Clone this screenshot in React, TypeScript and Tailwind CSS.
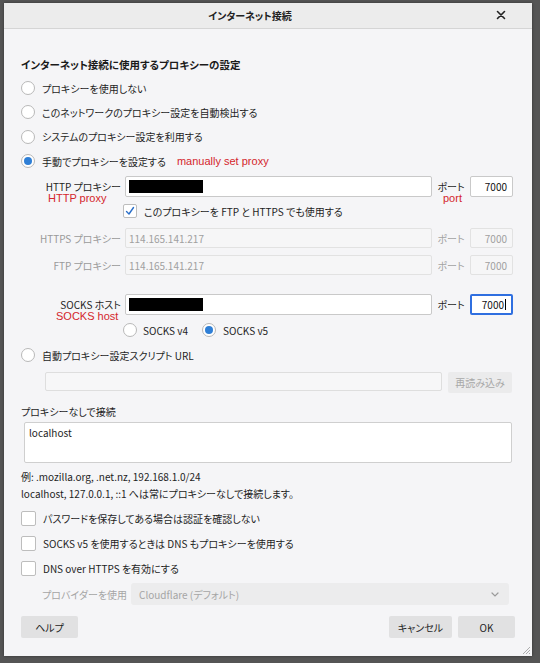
import React from "react";

const jp = "font-['Noto_Sans_CJK_JP','Noto_Sans',sans-serif] [font-feature-settings:'palt']";
const note = "font-['Liberation_Sans',Arial,sans-serif] text-[11px] leading-none text-[#d4262c]";

const Radio: React.FC<{ checked?: boolean }> = ({ checked }) => (
  <span className="flex h-[14px] w-[14px] shrink-0 items-center justify-center rounded-full border border-[#b8b8b8] bg-white">
    {checked && <span className="h-[8px] w-[8px] rounded-full bg-[#2f7fd6]" />}
  </span>
);

const Check: React.FC<{ checked?: boolean; size?: string }> = ({ checked, size = "h-[14px] w-[14px]" }) => (
  <span className={`flex ${size} shrink-0 items-center justify-center rounded-[2px] border border-[#bdbdbd] bg-white`}>
    {checked && (
      <svg width="10" height="10" viewBox="0 0 10 10" fill="none">
        <path d="M1.5 5.5 L4 8 L8.5 1.5" stroke="#2b6fc9" strokeWidth="1.4" strokeLinecap="round" strokeLinejoin="round" />
      </svg>
    )}
  </span>
);

// one "label / host / port" line of the manual proxy block
const ProxyRow: React.FC<{
  label: string;
  value?: string;
  disabled?: boolean;
  redacted?: boolean;
  focusPort?: boolean;
  h: string;
  className?: string;
  children?: React.ReactNode;
}> = ({ label, value, disabled, redacted, focusPort, h, className = "", children }) => (
  <div className={`relative flex items-center ${h} ${className}`}>
    <div className={`w-[100px] text-right leading-[11px] ${disabled ? "text-[#9a9a9a]" : "text-[#1e1e1e]"}`}>{label}</div>
    <div
      className={`ml-[4px] flex h-full w-[307px] items-center rounded-[2px] border px-[3px] ${
        disabled ? "border-[#e2e2e2] bg-[#f6f6f7] text-[#a0a0a0]" : "border-[#c9c9c9] bg-white"
      }`}
    >
      {redacted && <span className="h-[13px] w-[74px] bg-black" />}
      {value && <span>{value}</span>}
    </div>
    <div className={`w-[38px] text-center leading-[11px] ${disabled ? "text-[#a3a3a3]" : "text-[#1e1e1e]"}`}>ポート</div>
    <div
      className={`flex h-full w-[43px] items-center justify-end rounded-[2px] px-[5px] ${
        focusPort
          ? "border-2 border-[#2f6fe0] bg-white text-[#111]"
          : disabled
          ? "border border-[#e2e2e2] bg-[#f6f6f7] text-[#a0a0a0]"
          : "border border-[#c9c9c9] bg-white text-[#111]"
      }`}
    >
      7000{focusPort && <span className="ml-[1px] h-[11px] w-px bg-black" />}
    </div>
    {children}
  </div>
);

const App: React.FC = () => {
  return (
    <div className={`h-[663px] w-[540px] overflow-hidden bg-[#555555] pl-[4px] pt-[3px] ${jp} text-[10px] text-[#1e1e1e]`}>
      <div className="flex h-[653px] w-[528px] flex-col bg-[#f5f5f7] shadow-[0_0_3px_rgba(0,0,0,0.4)]">
        {/* Title bar */}
        <div className="relative flex h-[26px] shrink-0 items-center justify-center border-b border-[#d5d5d5] bg-[#ececec] pr-[36px]">
          <span className="text-[10px] font-semibold text-[#222]">インターネット接続</span>
          <span className="absolute right-[26px] top-[7px]">
            <svg width="10" height="10" viewBox="0 0 10 10">
              <path d="M1.5 1.5 L8.5 8.5 M8.5 1.5 L1.5 8.5" stroke="#222" strokeWidth="1.6" strokeLinecap="round" />
            </svg>
          </span>
        </div>

        <div className="flex flex-col pl-[17px]">
          <div className="mt-[28px] h-[16px] text-[10.5px] font-bold leading-[16px] text-[#1a1a1a]">
            インターネット接続に使用するプロキシーの設定
          </div>

          <div className="mt-[3px] flex h-[24px] items-center gap-[7px]">
            <Radio />
            <span>プロキシーを使用しない</span>
          </div>
          <div className="flex h-[24px] items-center gap-[7px]">
            <Radio />
            <span>このネットワークのプロキシー設定を自動検出する</span>
          </div>
          <div className="flex h-[25px] items-center gap-[7px]">
            <Radio />
            <span>システムのプロキシー設定を利用する</span>
          </div>
          <div className="flex h-[24px] items-center gap-[7px]">
            <Radio checked />
            <span>手動でプロキシーを設定する</span>
            <span className={`${note} ml-[4px]`}>manually set proxy</span>
          </div>

          <ProxyRow label="HTTP プロキシー" redacted h="h-[21px]" className="mt-[3px]">
            <span className={`${note} absolute left-[27px] top-[17px]`}>HTTP proxy</span>
            <span className={`${note} absolute left-[422px] top-[17px]`}>port</span>
          </ProxyRow>

          <div className="ml-[102px] mt-[7px] flex h-[14px] items-center gap-[7px]">
            <Check checked />
            <span>このプロキシーを FTP と HTTPS でも使用する</span>
          </div>

          <ProxyRow label="HTTPS プロキシー" value="114.165.141.217" disabled h="h-[20px]" className="mt-[10px]" />
          <ProxyRow label="FTP プロキシー" value="114.165.141.217" disabled h="h-[20px]" className="mt-[7px]" />

          <ProxyRow label="SOCKS ホスト" redacted focusPort h="h-[21px]" className="mt-[19px]">
            <span className={`${note} absolute left-[35px] top-[17px]`}>SOCKS host</span>
          </ProxyRow>

          <div className="ml-[102px] mt-[8px] flex h-[14px] items-center">
            <Radio />
            <span className="ml-[6px]">SOCKS v4</span>
            <span className="ml-[14px]">
              <Radio checked />
            </span>
            <span className="ml-[7px]">SOCKS v5</span>
          </div>

          <div className="mt-[11px] flex h-[14px] items-center gap-[7px]">
            <Radio />
            <span>自動プロキシー設定スクリプト URL</span>
          </div>

          <div className="mt-[10px] flex h-[20px] items-start">
            <div className="ml-[24px] h-[19px] w-[397px] rounded-[2px] border border-[#dedede] bg-[#f7f7f8]" />
            <div className="ml-[6px] flex h-[21px] w-[64px] items-center justify-center rounded-[2px] bg-[#ebebec] text-[#a8a8a8]">
              再読み込み
            </div>
          </div>

          <div className="mt-[12px] flex h-[14px] items-center">プロキシーなしで接続</div>

          <div className="ml-[3px] mt-[4px] h-[41px] w-[488px] rounded-[2px] border border-[#cfcfcf] bg-white px-[4px] pt-[3px] leading-[14px]">
            localhost
          </div>

          <div className="mt-[6px] flex h-[14px] items-center">例: .mozilla.org, .net.nz, 192.168.1.0/24</div>
          <div className="mt-[3px] flex h-[14px] items-center">localhost, 127.0.0.1, ::1 へは常にプロキシーなしで接続します。</div>

          <div className="mt-[10px] flex h-[16px] items-center gap-[7px]">
            <Check size="h-[15px] w-[15px]" />
            <span>パスワードを保存してある場合は認証を確認しない</span>
          </div>
          <div className="mt-[9px] flex h-[16px] items-center gap-[7px]">
            <Check size="h-[15px] w-[15px]" />
            <span>SOCKS v5 を使用するときは DNS もプロキシーを使用する</span>
          </div>
          <div className="mt-[9px] flex h-[16px] items-center gap-[7px]">
            <Check size="h-[15px] w-[15px]" />
            <span>DNS over HTTPS を有効にする</span>
          </div>

          <div className="mt-[7px] flex h-[22px] items-center">
            <span className="ml-[21px] w-[89px] text-[#a5a5a5]">プロバイダーを使用</span>
            <div className="flex h-full w-[378px] items-center justify-between rounded-[3px] bg-[#ececed] pl-[8px] pr-[10px] text-[#a5a5a5]">
              <span>Cloudflare (デフォルト)</span>
              <svg width="8" height="5" viewBox="0 0 8 5" fill="none">
                <path d="M1 1 L4 4 L7 1" stroke="#9a9a9a" strokeWidth="1.2" strokeLinecap="round" />
              </svg>
            </div>
          </div>

          <div className="mt-[11px] flex h-[22px] items-center">
            <div className="flex h-full w-[57px] items-center justify-center rounded-[2px] bg-[#e1e1e2]">ヘルプ</div>
            <div className="ml-auto flex h-full w-[63px] items-center justify-center rounded-[2px] bg-[#e1e1e2]">
              キャンセル
            </div>
            <div className="ml-[6px] mr-[17px] flex h-full w-[57px] items-center justify-center rounded-[2px] bg-[#e1e1e2]">
              OK
            </div>
          </div>
        </div>

        <div className="mt-auto flex justify-end pb-[1px] pr-[1px]">
          <svg width="10" height="10" viewBox="0 0 10 10">
            <path d="M9 2 L2 9 M9 5 L5 9 M9 8 L8 9" stroke="#9a9a9a" strokeWidth="0.8" />
          </svg>
        </div>
      </div>
    </div>
  );
};

export default App;
